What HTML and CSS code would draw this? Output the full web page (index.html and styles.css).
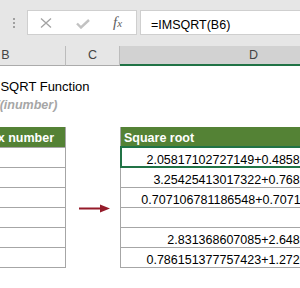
FILE: index.html
```html
<html>
<head>
    <title>IMSQRT Function</title>
    <link rel="stylesheet" href="styles.css">
</head>
<body>
    <div class="page">
        <div class="formula-bar">
            <div class="grip"><span></span><span></span><span></span></div>
            <div class="fx-tools">
                <svg class="icon-cancel" width="12" height="10" viewBox="0 0 12 10">
                    <path d="M1 0.5 L11 9.5 M11 0.5 L1 9.5" stroke="#a3a3a3" stroke-width="1.3" fill="none"/>
                </svg>
                <svg class="icon-enter" width="14" height="10" viewBox="0 0 14 10">
                    <polyline points="1,4.5 5,8.5 13,1" stroke="#c2c2c2" stroke-width="2.4" fill="none"/>
                </svg>
                <span class="fx">f<small>x</small></span>
            </div>
            <div class="formula-input">=IMSQRT(B6)</div>
        </div>

        <div class="col-headers">
            <div class="col-head col-b">B</div>
            <div class="col-head col-c">C</div>
            <div class="col-head col-d active">D</div>
        </div>

        <div class="sheet">
            <div class="title">IMSQRT Function</div>
            <div class="syntax">=IMSQRT(inumber)</div>

            <div class="tables">
                <div class="table table-input">
                    <div class="th">Complex number</div>
                    <div class="td"></div>
                    <div class="td"></div>
                    <div class="td"></div>
                    <div class="td"></div>
                    <div class="td"></div>
                    <div class="td"></div>
                </div>
                <div class="arrow-col">
                    <svg width="32" height="9" viewBox="0 0 32 9">
                        <rect x="0" y="3.5" width="23" height="2" fill="#951b2a"/>
                        <polygon points="21,0.5 31,4.5 21,8.5" fill="#951b2a"/>
                    </svg>
                </div>
                <div class="table table-output">
                    <div class="th">Square root</div>
                    <div class="td selected">2.05817102727149+0.485868271756646i</div>
                    <div class="td">3.25425413017322+0.76822562123426i</div>
                    <div class="td">0.707106781186548+0.707106781186548i</div>
                    <div class="td"></div>
                    <div class="td">2.831368607085+2.64885044701035i</div>
                    <div class="td">0.786151377757423+1.27201964951407i</div>
                </div>
            </div>
        </div>
    </div>
</body>
</html>
```

FILE: styles.css
```css
body {
    margin: 0;
    padding: 0;
    overflow: hidden;
    background: #ffffff;
    font-family: "Liberation Sans", Arial, sans-serif;
}
.page {
    width: 300px;
    height: 288px;
    overflow: hidden;
}

/* formula bar */
.formula-bar {
    height: 46px;
    box-sizing: border-box;
    padding-top: 10px;
    background: #e6e6e6;
    display: flex;
    align-items: flex-start;
}
.grip {
    width: 27px;
    flex: none;
    display: flex;
    flex-direction: column;
    align-items: center;
    gap: 2px;
    padding-top: 8px;
}
.grip span {
    width: 2px;
    height: 2px;
    background: #a0a0a0;
}
.fx-tools {
    width: 110px;
    height: 25px;
    flex: none;
    box-sizing: border-box;
    background: #fff;
    border: 1px solid #cfcfcf;
    display: flex;
    align-items: center;
    padding-left: 12px;
}
.icon-enter {
    margin-left: 24px;
    margin-top: 2px;
}
.fx {
    margin-left: 23px;
    font-family: "Liberation Serif", serif;
    font-style: italic;
    font-size: 15px;
    color: #5e5e5e;
    line-height: 15px;
}
.fx small {
    font-size: 11px;
}
.formula-input {
    flex: 1;
    height: 25px;
    margin-left: 3px;
    box-sizing: border-box;
    background: #fff;
    border: 1px solid #cfcfcf;
    border-right: none;
    padding: 4px 0 0 10px;
    font-size: 12.5px;
    line-height: 20px;
    color: #000;
}

/* column headers */
.col-headers {
    display: flex;
    height: 20px;
    background: #e6e6e6;
}
.col-head {
    box-sizing: border-box;
    height: 20px;
    text-align: center;
    font-size: 12.5px;
    line-height: 19px;
    color: #444;
    border-right: 1px solid #bcbcbc;
    border-bottom: 1px solid #ababab;
    flex: none;
}
.col-b {
    width: 120px;
    margin-left: -54px;
}
.col-c {
    width: 54px;
}
.col-d {
    width: 268px;
}
.col-head.active {
    background: #d2d2d2;
    border-bottom: 2px solid #217346;
}

/* sheet body */
.sheet {
    padding-top: 12px;
}
.title {
    font-size: 13px;
    line-height: 18px;
    margin-left: -14px;
    color: #000;
    white-space: nowrap;
}
.syntax {
    font-size: 12.5px;
    line-height: 18px;
    font-weight: bold;
    font-style: italic;
    color: #a6a6a6;
    margin-left: -56px;
    white-space: nowrap;
}
.tables {
    display: flex;
    margin-top: 13px;
}
.table {
    flex: none;
    box-sizing: border-box;
    font-size: 12.5px;
}
.table-input {
    width: 120px;
    margin-left: -54px;
    border-right: 1px solid #a6a6a6;
}
.table-output {
    width: 268px;
    border-left: 1px solid #a6a6a6;
}
.th {
    height: 20px;
    box-sizing: border-box;
    padding: 4px 0 0 3px;
    line-height: 14px;
    background: #548235;
    color: #fff;
    font-weight: bold;
    white-space: nowrap;
}
.table-input .th {
    text-align: right;
    padding-right: 11px;
}
.td {
    height: 20px;
    box-sizing: border-box;
    border-top: 1px solid #a6a6a6;
    padding: 6px 9px 0 0;
    line-height: 13px;
    text-align: right;
    white-space: nowrap;
    color: #000;
}
.td:last-child {
    height: 21px;
    border-bottom: 1px solid #a6a6a6;
}
.td.selected {
    outline: 2px solid #217346;
    outline-offset: -1px;
}
.arrow-col {
    width: 54px;
    flex: none;
    box-sizing: border-box;
    padding: 20px 0 0 13px;
    display: flex;
    align-items: center;
}
.arrow-col svg {
    margin-top: 1px;
}
```
